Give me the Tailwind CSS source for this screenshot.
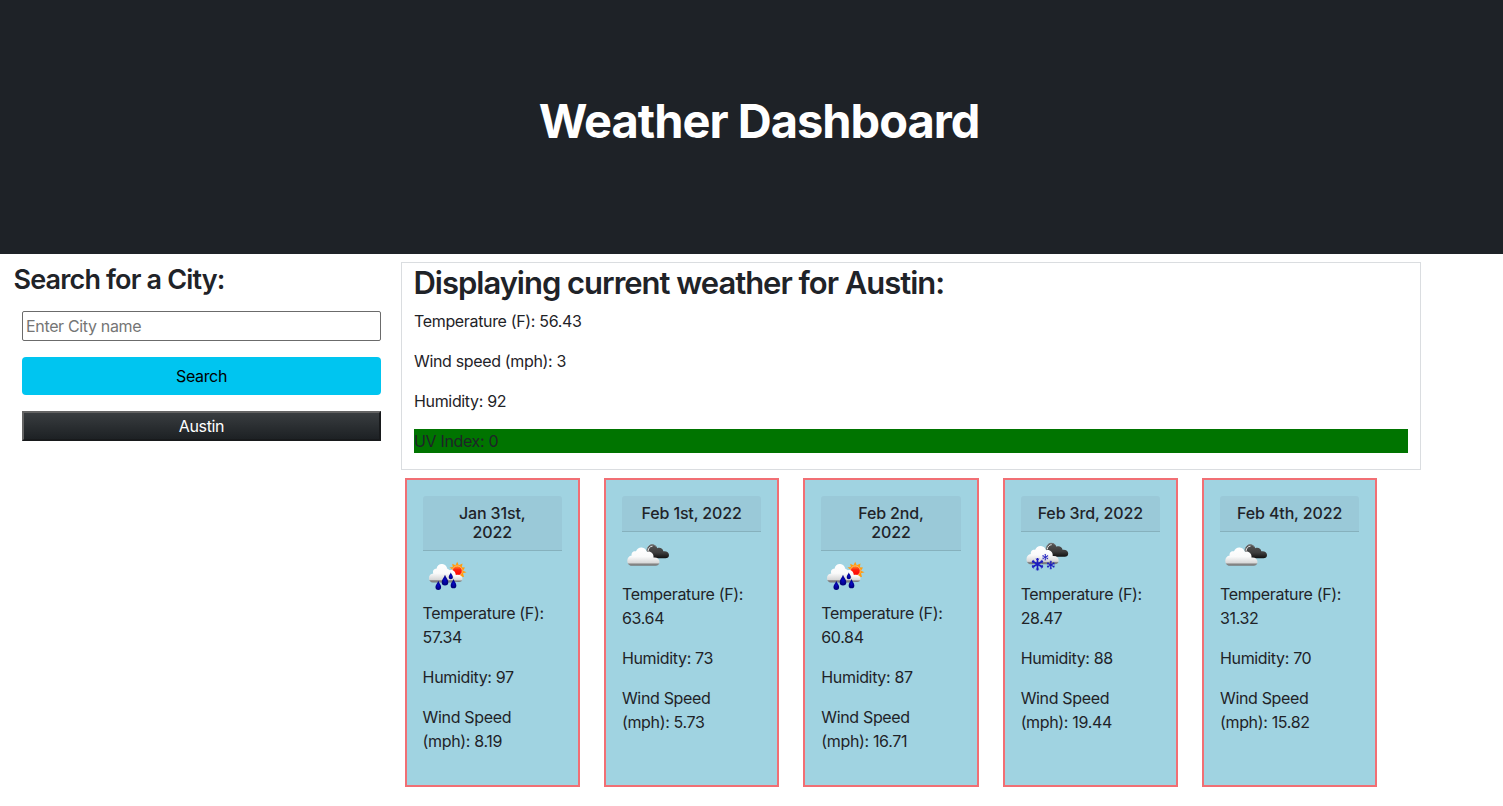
<!DOCTYPE html>
<html lang="en">
<head>
<meta charset="utf-8">
<title>Weather Dashboard</title>
<script src="https://cdn.jsdelivr.net/npm/@tailwindcss/browser@4"></script>
</head>
<body class="bg-white font-['Inter',sans-serif] text-base tracking-[-0.34px] text-[#1f2328]">
<svg class="absolute size-0">
  <defs>
    <linearGradient id="white" x1="0" y1="0" x2="0" y2="1"><stop offset="0" stop-color="#fff"/><stop offset=".5" stop-color="#fafafa"/><stop offset=".84" stop-color="#d8d8d8"/><stop offset=".9" stop-color="#888"/><stop offset="1" stop-color="#777"/></linearGradient>
    <linearGradient id="dark" x1="0" y1="0" x2="0" y2="1"><stop offset="0" stop-color="#555"/><stop offset=".6" stop-color="#3d3d3d"/><stop offset="1" stop-color="#111"/></linearGradient>
    <linearGradient id="sun" x1="0" y1="0" x2="0" y2="1"><stop offset="0" stop-color="#ff9a20"/><stop offset=".4" stop-color="#ff2010"/><stop offset="1" stop-color="#ff0000"/></linearGradient>
    <radialGradient id="drop"><stop offset="0" stop-color="#0808c8"/><stop offset="1" stop-color="#000078"/></radialGradient>
    <path id="raindrop" d="M0-5.2C.8-2.6 3-1 3 1.5A3 3 0 0 1-3 1.5C-3-1-.8-2.6 0-5.2Z" fill="url(#drop)"/>
    <g id="flake" fill="none" stroke="#1c1cc0"><path stroke-width="1.700" d="M0-6.200V6.200M-5.400-3.100 5.400 3.100M-5.400 3.100 5.400-3.100"/><path stroke-width=".8" d="M-1.700-5.400 0-4 1.700-5.400M-1.700 5.400 0 4 1.700 5.400M-5.600-1.100-3.600-2-3.900-4.300M5.600 1.100 3.600 2 3.900 4.300M-5.600 1.100-3.600 2-3.900 4.300M5.600-1.100 3.600-2 3.900-4.300"/></g>
    <g id="clouds">
      <path d="M25 20C25 15.500 27 12.500 30 12.500C33 12.500 34.500 14 35.300 16.200C38 15.200 41 16.500 41.300 19.300C44.500 18.800 47 20.500 47 23C47 25.200 45.500 26.300 43.500 26.300H29Z" fill="url(#dark)"/>
      <path d="M24.800 19C25.300 15 27.300 12.800 30 12.800C31.800 12.800 33 13.500 34 14.800" fill="none" stroke="#777" stroke-width="1"/>
      <path d="M26 19C26.500 16 28 14.200 30.500 14.200" fill="none" stroke="#e8e8e8" stroke-width="1"/>
      <path d="M9.500 33.800C7 33.800 5.300 31.500 5.300 28.800C5.300 26 7 23.900 9.700 23.500C9 20.800 11.300 18.500 14 19.300C15 16.700 17.200 15.200 19.800 15.500C22.300 15.700 24 17.300 24.800 19.800C28.500 18.800 32 21.500 31.500 25.500C35 25 37.500 27 37.500 29.800C37.500 32.300 36 33.800 33.500 33.800Z" fill="url(#white)"/>
    </g>
    <symbol id="broken" viewBox="0 0 50 50"><use href="#clouds"/></symbol>
    <symbol id="snow" viewBox="0 0 50 50">
      <use href="#clouds" transform="translate(.2 -1.500)"/>
      <use href="#flake" transform="translate(16.500 32.200)"/>
      <use href="#flake" transform="translate(24.300 25.200) scale(.52)"/>
      <use href="#flake" transform="translate(29.800 33) scale(.68)"/>
    </symbol>
    <symbol id="rain" viewBox="0 0 50 50">
      <path d="M34.200 10.800 35.800 14.300 39.500 12.500 38.800 16.200 42 16.500 40 19.700 43.600 21.200 40 22.300 41 26 37.500 25.500 34 28 28 22 29.300 18.500 26.500 16.500 29.800 16 29.200 12.800 32.500 14.300Z" fill="#ff9c10"/>
      <circle cx="34.300" cy="19.800" r="4.900" fill="url(#sun)" stroke="#ffc080" stroke-width=".8"/>
      <path d="M24 30.500C22.500 24 25 18 29 19C31.500 19.500 32.500 21.500 32.800 24C36 23 39.500 24.500 39.500 27.500C39.500 30 38 31 36 31Z" fill="url(#white)"/>
      <path d="M10 31.500C7.500 31.500 6 29.500 6 27.200C6 24.500 7.800 22.700 10.300 22.600C9.200 19.700 11 17.800 13.500 17.800C14 14.700 16.500 12.800 19.300 13.100C22 13.300 23.800 15.300 24.300 17.800C27 18.800 29 21 28.500 24.500C31 25 32 27 31.500 31.500Z" fill="url(#white)"/>
      <use href="#raindrop" transform="translate(15.300 34.600) scale(.95)"/>
      <use href="#raindrop" transform="translate(22 29.500) scale(1.100)"/>
      <use href="#raindrop" transform="translate(27.800 25.200) scale(.7)"/>
      <use href="#raindrop" transform="translate(30.500 33) scale(.95)"/>
    </symbol>
  </defs>
</svg>

<header class="flex h-[254px] items-center justify-center bg-[#1e2227] pb-3 pl-[15px]">
  <h1 class="text-[47px] leading-[58px] font-bold tracking-[-1px] whitespace-nowrap text-white">Weather Dashboard</h1>
</header>

<main class="flex items-start">
  <aside class="w-[401px] shrink-0 pt-2 pr-5 pl-[22px]">
    <h2 class="-ml-[8.500px] text-[27px] leading-[35px] font-semibold tracking-[-0.84px] whitespace-nowrap">Search for a City:</h2>
    <input class="mt-[14px] block h-[30px] w-full rounded-[2px] border border-[#6b6b6b] bg-white px-[3px] placeholder:text-[#757575]" placeholder="Enter City name">
    <button class="mt-4 block h-[38px] w-full rounded-[4px] bg-[#00c5f0] text-black">Search</button>
    <button class="mt-4 block h-[30px] w-full border-2 border-t-[#646464] border-r-[#181a1c] border-b-[#181a1c] border-l-[#646464] bg-linear-to-b from-[#393d40] to-[#1d2124] leading-[26px] text-white">Austin</button>
  </aside>

  <div class="w-[1020px] shrink-0 pt-2">
    <section class="h-[208px] border border-[#dadde0] px-3">
      <h2 class="mb-1.5 -ml-[0.500px] text-[31px] leading-[40px] font-semibold tracking-[-1.02px] whitespace-nowrap">Displaying current weather for Austin:</h2>
      <p class="mb-4">Temperature (F): 56.43</p>
      <p class="mb-4">Wind speed (mph): 3</p>
      <p class="mb-4">Humidity: 92</p>
      <p class="bg-[#007400]">UV Index: 0</p>
    </section>

    <section class="mt-2 flex h-[309px] gap-6 pl-[3.6px] [&>article]:w-[175.35px] [&>article]:shrink-0 [&>article]:border-2 [&>article]:border-[#f16f74] [&>article]:bg-[#a0d3e1] [&>article]:p-4 [&_h3]:rounded-t-[3px] [&_h3]:border-b [&_h3]:border-[#86b1bd] [&_h3]:bg-[#9ac9d8] [&_h3]:px-4 [&_h3]:py-2 [&_h3]:text-center [&_h3]:leading-[19.200px] [&_h3]:font-medium [&_h3]:tracking-[-0.14px] [&_h3]:whitespace-nowrap [&_p]:mb-4 [&_svg]:size-[50px]">
      <article>
        <h3>Jan 31st,<br>2022</h3>
        <svg><use href="#rain"/></svg>
        <p>Temperature (F):<br>57.34</p>
        <p>Humidity: 97</p>
        <p>Wind Speed<br>(mph): 8.19</p>
      </article>
      <article>
        <h3>Feb 1st, 2022</h3>
        <svg><use href="#broken"/></svg>
        <p>Temperature (F):<br>63.64</p>
        <p>Humidity: 73</p>
        <p>Wind Speed<br>(mph): 5.73</p>
      </article>
      <article>
        <h3>Feb 2nd,<br>2022</h3>
        <svg><use href="#rain"/></svg>
        <p>Temperature (F):<br>60.84</p>
        <p>Humidity: 87</p>
        <p>Wind Speed<br>(mph): 16.71</p>
      </article>
      <article>
        <h3>Feb 3rd, 2022</h3>
        <svg><use href="#snow"/></svg>
        <p>Temperature (F):<br>28.47</p>
        <p>Humidity: 88</p>
        <p>Wind Speed<br>(mph): 19.44</p>
      </article>
      <article>
        <h3>Feb 4th, 2022</h3>
        <svg><use href="#broken"/></svg>
        <p>Temperature (F):<br>31.32</p>
        <p>Humidity: 70</p>
        <p>Wind Speed<br>(mph): 15.82</p>
      </article>
    </section>
  </div>
</main>
</body>
</html>
